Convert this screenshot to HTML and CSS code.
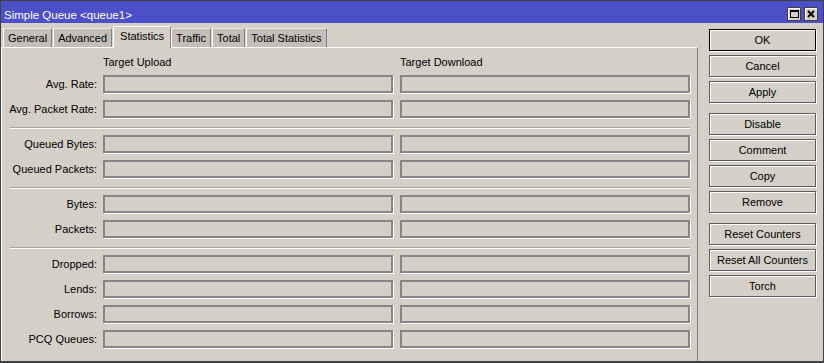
FILE: index.html
```html
<!DOCTYPE html>
<html>
<head>
  <title>Simple Queue &lt;queue1&gt;</title>
  <link rel="stylesheet" href="styles.css">
</head>
<body>
  <div class="window">
    <div class="titlebar">
      <span class="title">Simple Queue &lt;queue1&gt;</span>
      <div class="tb-buttons">
        <span class="tb-btn"><span class="max-icon"></span></span>
        <span class="tb-btn">
          <svg width="12" height="12" viewBox="0 0 12 12"><path d="M3 3 L9 9 M9 3 L3 9" stroke="#000" stroke-width="2"/></svg>
        </span>
      </div>
    </div>

    <div class="content">
      <div class="left">
        <div class="tabs">
          <span class="tab">General</span>
          <span class="tab">Advanced</span>
          <span class="tab selected">Statistics</span>
          <span class="tab">Traffic</span>
          <span class="tab">Total</span>
          <span class="tab">Total Statistics</span>
        </div>

        <div class="panel">
          <div class="head">
            <span class="head-col">Target Upload</span>
            <span class="head-col">Target Download</span>
          </div>

          <div class="row"><span class="label">Avg. Rate:</span><input class="field" readonly><input class="field" readonly></div>
          <div class="row"><span class="label">Avg. Packet Rate:</span><input class="field" readonly><input class="field" readonly></div>
          <div class="sep"></div>
          <div class="row"><span class="label">Queued Bytes:</span><input class="field" readonly><input class="field" readonly></div>
          <div class="row"><span class="label">Queued Packets:</span><input class="field" readonly><input class="field" readonly></div>
          <div class="sep"></div>
          <div class="row"><span class="label">Bytes:</span><input class="field" readonly><input class="field" readonly></div>
          <div class="row"><span class="label">Packets:</span><input class="field" readonly><input class="field" readonly></div>
          <div class="sep"></div>
          <div class="row"><span class="label">Dropped:</span><input class="field" readonly><input class="field" readonly></div>
          <div class="row"><span class="label">Lends:</span><input class="field" readonly><input class="field" readonly></div>
          <div class="row"><span class="label">Borrows:</span><input class="field" readonly><input class="field" readonly></div>
          <div class="row"><span class="label">PCQ Queues:</span><input class="field" readonly><input class="field" readonly></div>
        </div>
      </div>

      <div class="actions">
        <button class="btn default">OK</button>
        <button class="btn">Cancel</button>
        <button class="btn">Apply</button>
        <button class="btn spaced">Disable</button>
        <button class="btn">Comment</button>
        <button class="btn">Copy</button>
        <button class="btn">Remove</button>
        <button class="btn spaced">Reset Counters</button>
        <button class="btn">Reset All Counters</button>
        <button class="btn">Torch</button>
      </div>
    </div>
  </div>
</body>
</html>
```

FILE: styles.css
```css
* {
  box-sizing: border-box;
}
body {
  margin: 0;
  background-color: #d4d0c8;
  font-family: "Liberation Sans", Arial, sans-serif;
  font-size: 11px;
  color: #000;
}
.window {
  width: 824px;
  height: 363px;
  border: 1px solid #404040;
  border-bottom-width: 2px;
  display: flex;
  flex-direction: column;
}
.titlebar {
  height: 22px;
  background-color: #4b50c8;
  color: #fff;
  display: flex;
  justify-content: space-between;
  align-items: flex-start;
  padding: 0 5px 0 3px;
}
.title {
  margin-top: 7px;
  line-height: 14px;
  font-size: 11.5px;
}
.tb-buttons {
  display: flex;
  gap: 3px;
  margin-top: 6px;
}
.tb-btn {
  width: 14px;
  height: 14px;
  background-color: #d4d0c8;
  border: 1px solid #404040;
  box-shadow: inset 1px 1px #fff;
  display: flex;
  align-items: center;
  justify-content: center;
}
.max-icon {
  width: 9px;
  height: 8px;
  border: 1px solid #000;
  border-top-width: 2px;
}
.content {
  flex: 1;
  display: flex;
}
.left {
  width: 697px;
  display: flex;
  flex-direction: column;
}
.tabs {
  height: 24px;
  display: flex;
  align-items: flex-end;
  padding-left: 2px;
}
.tab {
  height: 19px;
  line-height: 18px;
  padding: 0 4px;
  margin-right: 1px;
  background-color: #c3bfb8;
  border-top: 1px solid #e8e6e2;
  border-left: 1px solid #fff;
  border-right: 1px solid #808080;
}
.tab.selected {
  height: 22px;
  line-height: 18px;
  padding: 0 6px;
  margin-right: 0;
  margin-bottom: -1px;
  background-color: #d4d0c8;
  border-top: 1px solid #fff;
  position: relative;
  z-index: 1;
}
.panel {
  flex: 1;
  border-top: 1px solid #fff;
  border-left: 1px solid #fff;
  border-right: 1px solid #808080;
  padding-top: 7px;
}
.head {
  display: flex;
  height: 14px;
  line-height: 14px;
  margin-bottom: 6px;
  padding-left: 101px;
}
.head-col {
  width: 297px;
}
.row {
  display: flex;
  align-items: center;
  height: 18px;
  margin-bottom: 7px;
}
.label {
  width: 95px;
  margin-right: 6px;
  text-align: right;
  white-space: nowrap;
}
.field {
  width: 290px;
  height: 18px;
  margin: 0;
  padding: 0;
  background-color: #d4d0c8;
  border: 2px solid #868686;
  box-shadow: 1px 1px 0 #fff;
  outline: none;
}
.field + .field {
  margin-left: 7px;
}
.sep {
  width: 680px;
  height: 2px;
  margin: 9px 0 6px 8px;
  border-top: 1px solid #aaa69e;
  border-bottom: 1px solid #fff;
}
.actions {
  flex: 1;
  display: flex;
  flex-direction: column;
  gap: 4px;
  padding: 6px 0 0 11px;
}
.btn {
  width: 107px;
  height: 22px;
  padding: 0;
  font-family: inherit;
  font-size: 11px;
  color: #000;
  background-color: #d4d0c8;
  border: 1px solid #5c5c5c;
  box-shadow: inset 1px 1px #fff, 1px 1px 0 #fff;
}
.btn.default {
  border-color: #000;
}
.btn.spaced {
  margin-top: 6px;
}
```
